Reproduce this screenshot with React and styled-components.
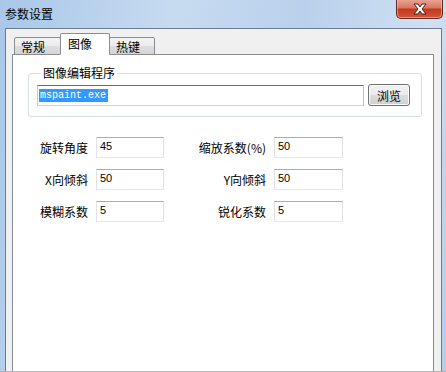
import React from 'react';
import styled, { createGlobalStyle } from 'styled-components';

const GlobalStyle = createGlobalStyle`
  html, body {
    margin: 0;
    padding: 0;
    background: #fff;
  }
  body {
    font-family: "Noto Sans CJK SC", "Liberation Sans", sans-serif;
    font-size: 12px;
    color: #000;
  }
`;

const fields = [
  [
    { label: '旋转角度', value: '45' },
    { label: '缩放系数(%)', value: '50' },
  ],
  [
    { label: 'X向倾斜', value: '50' },
    { label: 'Y向倾斜', value: '50' },
  ],
  [
    { label: '模糊系数', value: '5' },
    { label: '锐化系数', value: '5' },
  ],
];

const tabs = ['常规', '图像', '热键'];

function App() {
  return (
    <>
      <GlobalStyle />
      <Window>
        <TitleBar>
          <Title>参数设置</Title>
          <CloseButton>
            <svg width="16" height="12" viewBox="0 0 16 12">
              <path
                d="M2 1 L6 1 L8 4 L10 1 L14 1 L10 6 L14 11 L10 11 L8 8 L6 11 L2 11 L6 6 Z"
                fill="#fff"
                stroke="#4a1f18"
                strokeWidth="1"
                strokeLinejoin="round"
              />
            </svg>
          </CloseButton>
        </TitleBar>
        <Client>
          <TabRow>
            {tabs.map((t, i) => (
              <Tab key={t} $active={i === 1} $first={i === 0}>
                {t}
              </Tab>
            ))}
          </TabRow>
          <Pane>
            <Group>
              <Legend>图像编辑程序</Legend>
              <PathRow>
                <PathBox>
                  <Selected>mspaint.exe</Selected>
                  <Caret />
                </PathBox>
                <Button>浏览</Button>
              </PathRow>
            </Group>
            <FieldGrid>
              {fields.map((row, r) =>
                row.map((f, c) => (
                  <React.Fragment key={`${r}-${c}`}>
                    <Label>{f.label}</Label>
                    <TextBox>{f.value}</TextBox>
                  </React.Fragment>
                ))
              )}
            </FieldGrid>
          </Pane>
        </Client>
      </Window>
    </>
  );
}

const Window = styled.div`
  width: 446px;
  height: 372px;
  box-sizing: border-box;
  overflow: hidden;
  display: flex;
  flex-direction: column;
  background: linear-gradient(
    100deg,
    #a9c7e9 0%,
    #c7dbf0 35%,
    #b9d1ec 60%,
    #cfe0f2 85%,
    #b3cdea 100%
  );
  border-bottom: 1px solid #b5b5b5;
`;

const TitleBar = styled.div`
  height: 28px;
  flex: none;
  display: flex;
  justify-content: space-between;
  align-items: flex-start;
`;

const Title = styled.div`
  padding-left: 5px;
  line-height: 28px;
  font-size: 12px;
  color: #000;
`;

const CloseButton = styled.div`
  width: 45px;
  height: 19px;
  margin-right: 3px;
  margin-top: -1px;
  display: flex;
  align-items: center;
  justify-content: center;
  border: 1px solid #5c2a22;
  border-top: none;
  border-radius: 0 0 5px 5px;
  background: linear-gradient(
    to bottom,
    #e9a99a 0%,
    #d9775f 45%,
    #c4391f 55%,
    #d4553a 100%
  );
  box-shadow: inset 0 0 0 1px rgba(255, 210, 200, 0.5);
`;

const Client = styled.div`
  flex: 1;
  margin: 0 4px 0 5px;
  border: 1px solid #6d7c8c;
  border-bottom: none;
  background: #f0f0f0;
  padding: 4px 7px 0 6px;
  display: flex;
  flex-direction: column;
  min-height: 0;
`;

const TabRow = styled.div`
  display: flex;
  align-items: flex-end;
  padding-left: 2px;
  margin-bottom: -1px;
  position: relative;
  z-index: 1;
`;

const Tab = styled.div`
  box-sizing: border-box;
  border: 1px solid #898c95;
  border-bottom: ${(p) => (p.$active ? '1px solid #fff' : '1px solid #898c95')};
  border-radius: 2px 2px 0 0;
  height: ${(p) => (p.$active ? '22px' : '18px')};
  width: ${(p) => (p.$active ? '50px' : p.$first ? '47px' : '46px')};
  margin-left: ${(p) => (p.$active ? '-1px' : p.$first ? '0' : '-1px')};
  padding-left: ${(p) => (p.$active ? '7px' : '6px')};
  line-height: ${(p) => (p.$active ? '20px' : '17px')};
  font-size: 12px;
  background: ${(p) =>
    p.$active
      ? '#fff'
      : 'linear-gradient(to bottom, #f3f3f3 0%, #ebebeb 50%, #dedede 51%, #d5d5d5 100%)'};
  position: relative;
  z-index: ${(p) => (p.$active ? 2 : 1)};
`;

const Pane = styled.div`
  flex: 1;
  background: #fff;
  border: 1px solid #898c95;
  border-bottom: none;
  padding: 10px 11px 0 15px;
`;

const Group = styled.fieldset`
  margin: 0;
  padding: 3px 11px 10px 8px;
  border: 1px solid #d5dfe5;
  border-radius: 3px;
`;

const Legend = styled.legend`
  margin-left: 4px;
  padding: 0 2px;
  font-size: 12px;
  line-height: 16px;
`;

const PathRow = styled.div`
  display: flex;
  align-items: center;
  gap: 4px;
`;

const PathBox = styled.div`
  box-sizing: border-box;
  flex: 1;
  height: 21px;
  border: 1px solid;
  border-color: #3d7bad #a4c9e3 #b7d9ed #b5cfe7;
  padding: 2px 1px;
  display: flex;
  align-items: center;
`;

const Selected = styled.span`
  background: #3399ff;
  color: #fff;
  font-family: "Liberation Mono", "DejaVu Sans Mono", monospace;
  font-size: 10px;
  line-height: 13px;
  padding: 0 1px;
`;

const Caret = styled.span`
  width: 1px;
  height: 13px;
  background: #e0701a;
`;

const Button = styled.div`
  box-sizing: border-box;
  width: 42px;
  height: 22px;
  border: 1px solid #707070;
  border-radius: 3px;
  display: flex;
  align-items: center;
  justify-content: center;
  font-size: 12px;
  background: linear-gradient(
    to bottom,
    #f2f2f2 0%,
    #ebebeb 50%,
    #dddddd 51%,
    #cfcfcf 100%
  );
  box-shadow: inset 0 0 0 1px #fcfcfc;
`;

const FieldGrid = styled.div`
  display: grid;
  grid-template-columns: 48px 68px 94px 69px;
  column-gap: 8px;
  row-gap: 11px;
  margin: 20px 0 0 12px;
  align-items: center;
`;

const Label = styled.div`
  text-align: right;
  font-size: 12px;
  white-space: nowrap;
`;

const TextBox = styled.div`
  box-sizing: border-box;
  height: 21px;
  border: 1px solid;
  border-color: #abadb3 #dbdfe6 #e3e9ef #e2e3ea;
  padding: 2px 3px;
  font-family: "Liberation Sans", "DejaVu Sans", sans-serif;
  font-size: 11px;
  line-height: 13px;
`;

export default App;
